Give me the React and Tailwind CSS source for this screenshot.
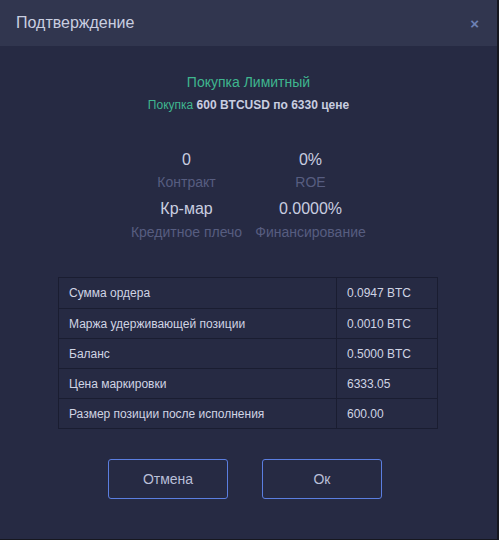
export default function App() {
  const rows = [
    ["Сумма ордера", "0.0947 BTC"],
    ["Маржа удерживающей позиции", "0.0010 BTC"],
    ["Баланс", "0.5000 BTC"],
    ["Цена маркировки", "6333.05"],
    ["Размер позиции после исполнения", "600.00"],
  ];
  return (
    <div className="w-[499px] h-[540px] bg-[#16171f] overflow-hidden" style={{ fontFamily: '"Liberation Sans", Arial, sans-serif' }}>
      <div className="w-[497px] h-[539px] bg-[#262a43] flex flex-col">
        <div className="h-[46px] bg-[#31364f] flex items-center justify-between pl-[16px] pr-[18px]">
          <span className="text-[16px] text-[#c9cee0]">Подтверждение</span>
          <span className="text-[15px] font-bold text-[#6d80b3] leading-none">×</span>
        </div>
        <div className="flex flex-col items-center pt-[27px]">
          <div className="text-[14px] text-[#3fb68f] leading-[18px]">Покупка Лимитный</div>
          <div className="text-[12px] leading-[16px] mt-[6px] text-[#c9cee0] font-bold">
            <span className="text-[#3fb68f] font-normal">Покупка</span> 600 BTCUSD по 6330 цене
          </div>
          <div className="grid grid-cols-[118px_118px] gap-x-[6px] mt-[36px] text-center">
            <div className="text-[16px] leading-[22px] text-[#c9cee0]">0</div>
            <div className="text-[16px] leading-[22px] text-[#c9cee0]">0%</div>
            <div className="text-[14px] leading-[22px] text-[#575d80] whitespace-nowrap">Контракт</div>
            <div className="text-[14px] leading-[22px] text-[#575d80] whitespace-nowrap">ROE</div>
            <div className="text-[16px] leading-[32px] text-[#c9cee0] whitespace-nowrap">Кр-мар</div>
            <div className="text-[16px] leading-[32px] text-[#c9cee0] whitespace-nowrap">0.0000%</div>
            <div className="text-[14px] leading-[14px] text-[#575d80] whitespace-nowrap">Кредитное плечо</div>
            <div className="text-[14px] leading-[14px] text-[#575d80] whitespace-nowrap">Финансирование</div>
          </div>
          <div className="mt-[38px] w-[380px] border border-[#1a1d31] mr-[1px]">
            {rows.map(([a, b], i) => (
              <div key={i} className={`flex h-[30px] ${i > 0 ? "border-t border-[#1a1d31]" : ""}`}>
                <div className="w-[278px] pl-[10px] flex items-center text-[12px] text-[#d0d4e4] border-r border-[#1a1d31]">{a}</div>
                <div className="flex-1 pl-[10px] flex items-center text-[12px] text-[#d0d4e4]">{b}</div>
              </div>
            ))}
          </div>
          <div className="flex gap-[34px] mt-[30px] mr-[7px]">
            <button className="w-[120px] h-[40px] border border-[#5b7ee0] rounded-[3px] text-[14px] text-[#b9bfd8]">Отмена</button>
            <button className="w-[120px] h-[40px] border border-[#5b7ee0] rounded-[3px] text-[14px] text-[#b9bfd8]">Ок</button>
          </div>
        </div>
      </div>
    </div>
  );
}
